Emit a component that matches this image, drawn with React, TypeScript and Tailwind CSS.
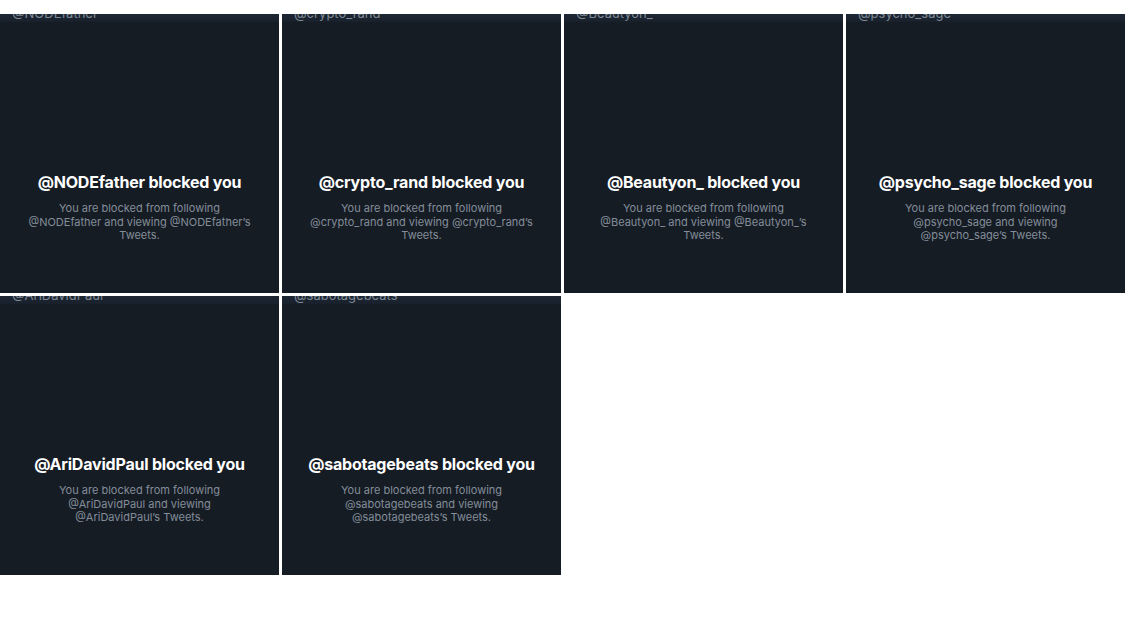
const handles = [
  'NODEfather',
  'crypto_rand',
  'Beautyon_',
  'psycho_sage',
  'AriDavidPaul',
  'sabotagebeats',
];

function BlockedCard({ handle }: { handle: string }) {
  return (
    <div className="h-[279px] bg-[#161c24] flex flex-col overflow-hidden">
      {/* cropped header strip with the clipped handle */}
      <div className="h-[8px] bg-gradient-to-b from-[#1d2734] to-[#18202b] overflow-hidden pl-[12px]">
        <div className="-mt-[8px] text-[13px] leading-[14px] text-[#7d8894]">@{handle}</div>
      </div>
      <div className="flex flex-col items-center text-center pt-[150px]">
        <div className="text-[16px] leading-[20px] font-bold text-white tracking-[-0.2px]">
          @{handle} blocked you
        </div>
        <div className="mt-[10px] w-[225px] text-[11px] leading-[13.5px] text-[#838d99]">
          You are blocked from following @{handle} and viewing @{handle}’s Tweets.
        </div>
      </div>
    </div>
  );
}

export default function App() {
  return (
    <div
      className="w-[1125px] h-[623px] bg-white pt-[14px]"
      style={{ fontFamily: 'Inter, "Noto Sans", sans-serif' }}
    >
      <div className="grid grid-cols-[repeat(4,279px)] gap-[3px]">
        {handles.map((h) => (
          <BlockedCard key={h} handle={h} />
        ))}
      </div>
    </div>
  );
}
